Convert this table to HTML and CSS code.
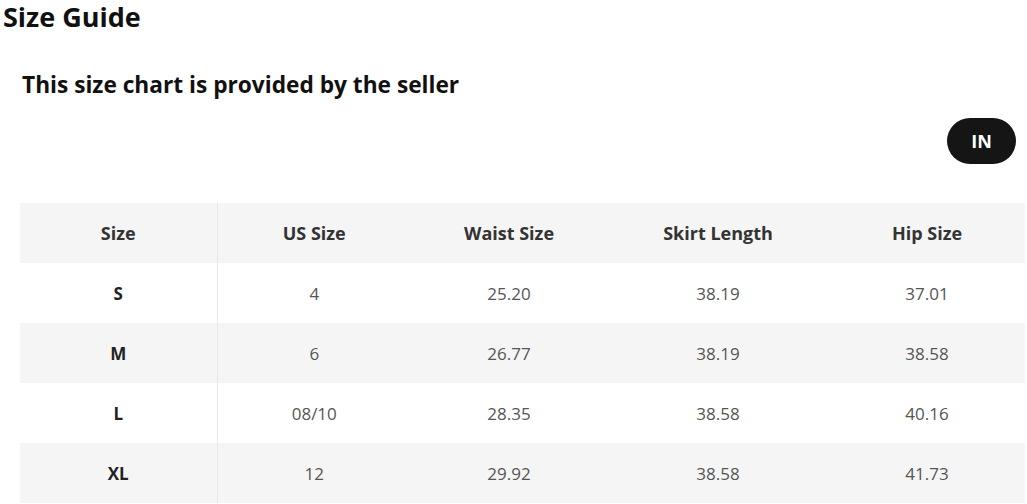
FILE: index.html
```html
<!DOCTYPE html>
<html>
<head>
<meta charset="utf-8">
<link rel="stylesheet" href="styles.css">
</head>
<body>
<div class="page">
  <h1 class="title">Size Guide</h1>
  <h2 class="subtitle">This size chart is provided by the seller</h2>
  <div class="unit-row"><span class="unit-pill">IN</span></div>
  <table class="chart">
    <colgroup>
      <col style="width:197px"><col style="width:194px"><col style="width:196px"><col style="width:222px"><col style="width:196px">
    </colgroup>
    <thead>
      <tr><th>Size</th><th>US Size</th><th>Waist Size</th><th>Skirt Length</th><th>Hip Size</th></tr>
    </thead>
    <tbody>
      <tr><td class="sz">S</td><td>4</td><td>25.20</td><td>38.19</td><td>37.01</td></tr>
      <tr class="alt"><td class="sz">M</td><td>6</td><td>26.77</td><td>38.19</td><td>38.58</td></tr>
      <tr><td class="sz">L</td><td>08/10</td><td>28.35</td><td>38.58</td><td>40.16</td></tr>
      <tr class="alt"><td class="sz">XL</td><td>12</td><td>29.92</td><td>38.58</td><td>41.73</td></tr>
    </tbody>
  </table>
</div>
</body>
</html>
```
FILE: styles.css
```css
html, body { margin: 0; padding: 0; background: #fff; }
body { font-family: "Open Sans", "Noto Sans", sans-serif; color: #111; }
.page { padding: 0 2px 0 20px; }
.title { margin: 0 0 0 -17px; font-size: 27px; font-weight: 700; line-height: 34px; color: #111; }
.subtitle { margin: 36px 0 0 2px; font-size: 22.7px; font-weight: 700; line-height: 30px; color: #111; }
.unit-row { display: flex; justify-content: flex-end; margin-top: 18px; padding-right: 9px; }
.unit-pill { display: flex; align-items: center; justify-content: center; width: 69px; height: 46px; border-radius: 23px; background: #151515; color: #fff; font-weight: 700; font-size: 18px; }
.chart { margin-top: 39px; border-collapse: collapse; table-layout: fixed; width: 1005px; }
.chart th, .chart td { height: 60px; padding: 0; text-align: center; font-size: 17px; }
.chart th { background: #f5f5f5; color: #333; font-weight: 700; font-size: 18px; }
.chart td { color: #555; font-weight: 400; }
.chart tr.alt td { background: #f5f5f5; }
.chart th:first-child, .chart td:first-child { border-right: 1px solid #e8e8e8; }
.chart td.sz { color: #222; font-weight: 700; }
```
